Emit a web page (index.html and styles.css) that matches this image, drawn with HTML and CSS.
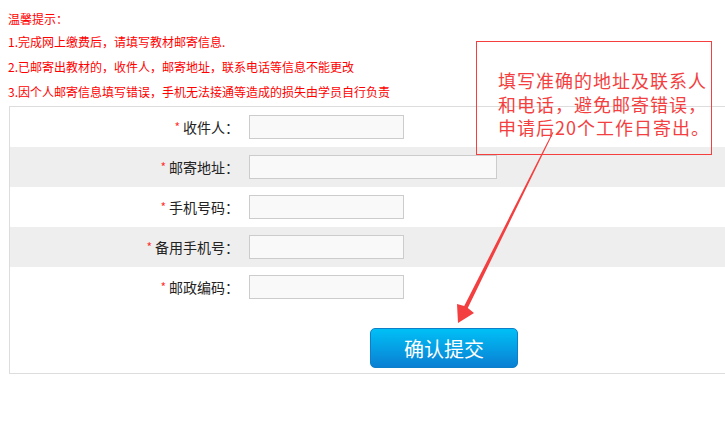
FILE: index.html
```html
<!DOCTYPE html>
<html lang="zh-CN">
<head>
    <meta charset="UTF-8">
    <title>教材邮寄信息</title>
    <link rel="stylesheet" href="styles.css">
</head>
<body>

<div class="tips">
    <p class="tips-title">温馨提示：</p>
    <p>1.完成网上缴费后，请填写教材邮寄信息.</p>
    <p>2.已邮寄出教材的，收件人，邮寄地址，联系电话等信息不能更改</p>
    <p>3.因个人邮寄信息填写错误，手机无法接通等造成的损失由学员自行负责</p>
</div>

<div class="form-box">
    <div class="row">
        <label class="label"><span class="star">*</span>收件人：</label>
        <input type="text" class="field">
    </div>
    <div class="row gray">
        <label class="label"><span class="star">*</span>邮寄地址：</label>
        <input type="text" class="field wide">
    </div>
    <div class="row">
        <label class="label"><span class="star">*</span>手机号码：</label>
        <input type="text" class="field">
    </div>
    <div class="row gray">
        <label class="label"><span class="star">*</span>备用手机号：</label>
        <input type="text" class="field">
    </div>
    <div class="row">
        <label class="label"><span class="star">*</span>邮政编码：</label>
        <input type="text" class="field">
    </div>
    <div class="actions">
        <button class="submit">确认提交</button>
    </div>
</div>

<!-- annotation overlay -->
<div class="note">填写准确的地址及联系人<br>和电话，避免邮寄错误，<br>申请后20个工作日寄出。</div>
<svg class="arrow" width="725" height="433" viewBox="0 0 725 433">
    <polygon points="552.6,132 553.4,132.4 467.8,307.9 474,313 458,323 457,304 464.2,306.1" fill="#f33f3f"/>
</svg>

</body>
</html>
```

FILE: styles.css
```css
body {
    margin: 0;
    padding: 0;
    font-family: "Noto Sans CJK SC", "Liberation Sans", sans-serif;
    background-color: #fff;
    color: #333;
    overflow: hidden;
}
.tips {
    padding: 6px 0 0 8px;
    color: #f00;
    font-size: 12px;
}
.tips p {
    margin: 0;
    height: 25px;
    line-height: 25px;
}
.tips .tips-title {
    height: 23px;
}
.form-box {
    margin-left: 9px;
    margin-top: 2px;
    width: 740px;
    border: 1px solid #ddd;
}
.row {
    display: flex;
    align-items: center;
    height: 40px;
}
.row.gray {
    background-color: #eee;
}
.label {
    width: 239px;
    padding-right: 10px;
    text-align: right;
    font-size: 14px;
    color: #222;
    box-sizing: border-box;
}
.star {
    color: #f33;
    font-size: 12px;
    margin-right: 3px;
    vertical-align: 1px;
}
.field {
    width: 155px;
    height: 24px;
    box-sizing: border-box;
    border: 1px solid #ccc;
    background-color: #f9f9f9;
    padding: 0 4px;
    margin: 0;
}
.field.wide {
    width: 248px;
}
.actions {
    padding: 21px 0 5px 360px;
}
.submit {
    width: 148px;
    height: 40px;
    border: 1px solid #0d7fc9;
    border-radius: 5px;
    background: linear-gradient(#00c0f6, #0a7fd3);
    color: #fff;
    font-family: "Noto Sans CJK SC", sans-serif;
    font-size: 20px;
    cursor: pointer;
}
.note {
    position: absolute;
    left: 476px;
    top: 41px;
    width: 236px;
    height: 114px;
    box-sizing: border-box;
    border: 1px solid #f33f3f;
    padding: 27px 0 0 21px;
    color: #f33f3f;
    font-size: 18px;
    line-height: 23.5px;
    letter-spacing: 1px;
    white-space: nowrap;
}
.arrow {
    position: absolute;
    left: 0;
    top: 0;
    pointer-events: none;
}
```
